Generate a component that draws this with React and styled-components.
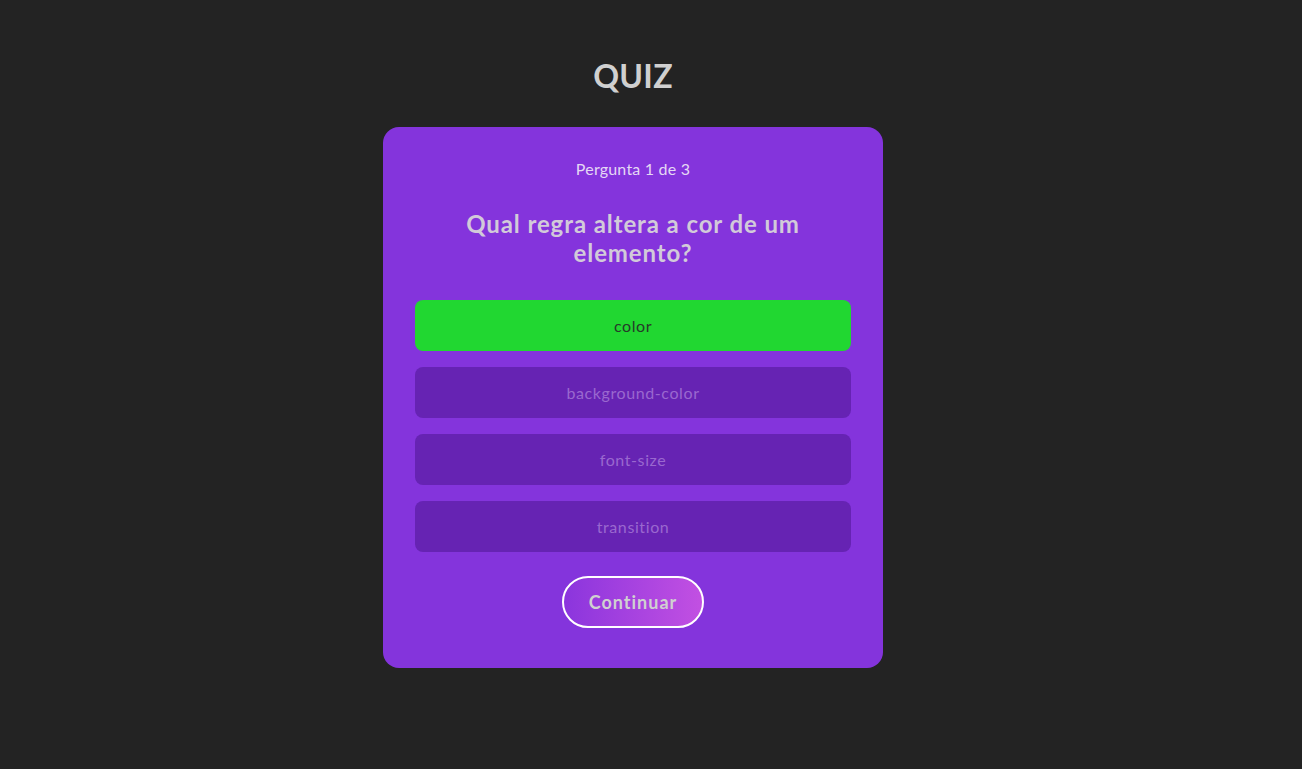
import React, { useState } from "react";
import styled, { createGlobalStyle } from "styled-components";

const GlobalStyle = createGlobalStyle`
  * { box-sizing: border-box; }
  body {
    margin: 0;
    background: #232323;
    font-family: "Lato", "Noto Sans", sans-serif;
  }
`;

const Page = styled.main`
  min-height: 100vh;
  display: flex;
  flex-direction: column;
  align-items: center;
  padding: 56px 36px 0 0;
`;

const Title = styled.h1`
  margin: 0 0 32px;
  height: 39px;
  line-height: 39px;
  font-size: 32px;
  font-weight: 700;
  color: #d0d0d0;
  letter-spacing: 0.3px;
`;

const Card = styled.section`
  width: 500px;
  background: #8434dc;
  border-radius: 16px;
  padding: 32px 32px 40px;
  display: flex;
  flex-direction: column;
  align-items: center;
`;

const Counter = styled.p`
  margin: 0;
  font-size: 16px;
  line-height: 20px;
  color: #e4d8f4;
  letter-spacing: 0.2px;
`;

const Question = styled.h2`
  margin: 30px 0 33px;
  max-width: 370px;
  text-align: center;
  font-size: 24px;
  line-height: 29px;
  font-weight: 700;
  letter-spacing: 0.9px;
  color: #d2cad9;
`;

const Options = styled.div`
  width: 100%;
  display: flex;
  flex-direction: column;
  gap: 16px;
`;

const Option = styled.button`
  height: 51px;
  width: 100%;
  border: none;
  border-radius: 8px;
  font-family: inherit;
  font-size: 16px;
  letter-spacing: 0.6px;
  cursor: pointer;
  background: ${(p) => (p.$correct ? "#21d731" : "#6623b3")};
  color: ${(p) => (p.$correct ? "#263a29" : "#9a68cf")};
`;

const ContinueBtn = styled.button`
  margin-top: 24px;
  width: 142px;
  height: 52px;
  border: 2px solid #ffffff;
  border-radius: 26px;
  background: linear-gradient(90deg, #8b35dd 0%, #c250e2 100%);
  font-family: inherit;
  font-size: 18px;
  font-weight: 700;
  letter-spacing: 1px;
  color: #d0d0d0;
  cursor: pointer;
`;

const options = ["color", "background-color", "font-size", "transition"];

export default function App() {
  const [selected] = useState(0);

  return (
    <>
      <GlobalStyle />
      <Page>
        <Title>QUIZ</Title>
        <Card>
          <Counter>Pergunta 1 de 3</Counter>
          <Question>Qual regra altera a cor de um elemento?</Question>
          <Options>
            {options.map((opt, i) => (
              <Option key={opt} $correct={i === selected}>
                {opt}
              </Option>
            ))}
          </Options>
          <ContinueBtn>Continuar</ContinueBtn>
        </Card>
      </Page>
    </>
  );
}
